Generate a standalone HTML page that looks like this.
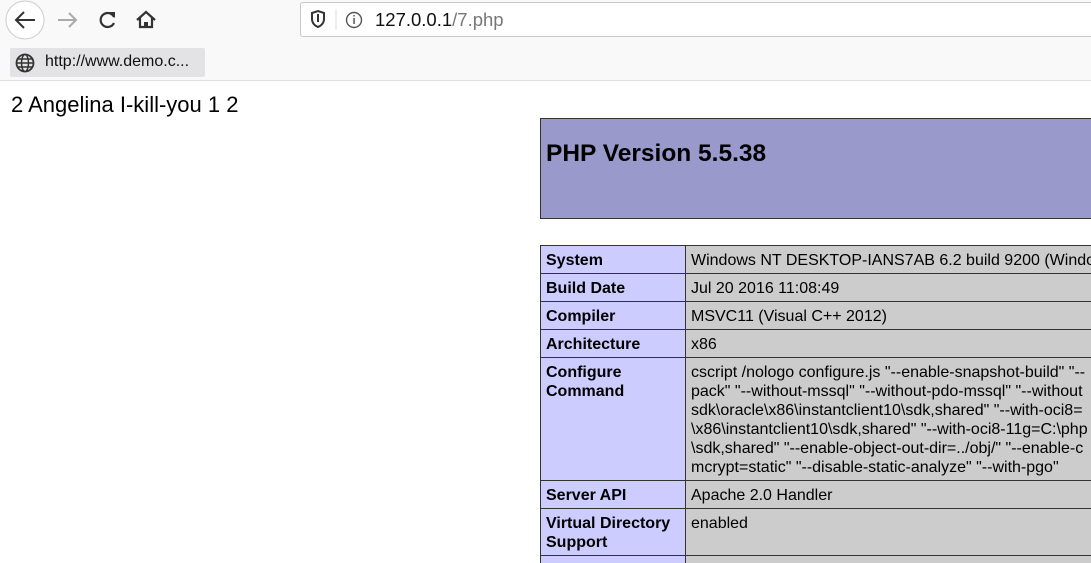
<!DOCTYPE html><html><head><style>
body{margin:0;width:1091px;height:563px;overflow:hidden;background:#fff;font-family:"Liberation Sans",Arial,sans-serif;position:relative}
.a{position:absolute}
.tb{left:0;top:0;width:1091px;height:40px;background:#f9f9fa}
.bm{left:0;top:40px;width:1091px;height:40px;background:#f9f9fa;border-bottom:1px solid #e0e0e0}
.url{left:300px;top:2px;width:791px;height:35px;background:#fff;border:1px solid #c8c8c8;border-right:none;border-radius:3px 0 0 3px;box-sizing:border-box}
.clip{left:0;top:0;width:1091px;height:563px;overflow:hidden}
table{position:absolute;left:540px;top:245px;border-collapse:collapse;width:640px;font-size:16px;table-layout:fixed}
td{border:1px solid #333;padding:5px 4px 3px 5px;vertical-align:top;line-height:19px;color:#000;overflow:hidden}
td.e{background:#ccccff;font-weight:bold}
td.v{background:#cccccc;white-space:nowrap}
</style></head><body>
<div class="a tb"></div>
<div class="a bm"></div>
<svg class="a" style="left:3px;top:0" width="170" height="40">
<circle cx="22" cy="20" r="19" fill="#fff" stroke="#ccc"/>
<path d="M32 20H14M21 12l-8 8 8 8" stroke="#333" stroke-width="2" fill="none"/>
<path d="M73 20H55M66 13l7 7-7 7" stroke="#aaa" stroke-width="2" fill="none"/>
<path d="M111 17a7 7 0 1 0 0 6" stroke="#333" stroke-width="2.2" fill="none"/><path d="M106 12h6v6z" fill="#333"/>
<path d="M134 20l9-8 9 8M137 18v9h12v-9" stroke="#333" stroke-width="2.2" fill="none"/><rect x="141" y="22" width="4" height="5" fill="#333"/>
</svg>
<div class="a url"></div>
<svg class="a" style="left:308px;top:8px" width="60" height="24">
<path d="M4 5l6-2 6 2v6c0 4-3 7-6 8-3-1-6-4-6-8z" stroke="#333" stroke-width="2" fill="none"/><rect x="9" y="6" width="2" height="8" fill="#333"/>
<line x1="28" y1="1" x2="28" y2="22" stroke="#ddd"/>
<circle cx="46" cy="12" r="7.5" stroke="#555" stroke-width="1.4" fill="none"/><rect x="45.3" y="10" width="1.5" height="6" fill="#555"/><rect x="45.3" y="7" width="1.5" height="1.5" fill="#555"/>
</svg>
<div class="a" style="left:375px;top:9px;font-size:18.5px;color:#111">127.0.0.1<span style="color:#777">/7.php</span></div>
<div class="a" style="left:10px;top:48px;width:195px;height:29px;background:#e3e3e5;border-radius:2px"></div>
<svg class="a" style="left:14px;top:52px" width="22" height="22"><circle cx="11" cy="11" r="8.5" stroke="#333" stroke-width="1.8" fill="none"/><ellipse cx="11" cy="11" rx="3.5" ry="8.5" stroke="#333" stroke-width="1.5" fill="none"/><path d="M2.5 11h17M4 7h14M4 15h14" stroke="#333" stroke-width="1.4"/></svg>
<div class="a" style="left:45px;top:53px;font-size:16px;color:#111">http://www.demo.c...</div>
<div class="a" style="left:11px;top:92px;font-size:22px;color:#000">2 Angelina I-kill-you 1 2</div>
<div class="clip a">
<div class="a" style="left:540px;top:118px;width:560px;height:99px;background:#9999cc;border:1px solid #333"></div>
<div class="a" style="left:546px;top:140px;font-size:24.5px;font-weight:bold;color:#000">PHP Version 5.5.38</div>
<table>
<colgroup><col style="width:145px"><col></colgroup>
<tr><td class="e">System</td><td class="v">Windows NT DESKTOP-IANS7AB 6.2 build 9200 (Windows 8 Business Edition)</td></tr>
<tr><td class="e">Build Date</td><td class="v">Jul 20 2016 11:08:49</td></tr>
<tr><td class="e">Compiler</td><td class="v">MSVC11 (Visual C++ 2012)</td></tr>
<tr><td class="e">Architecture</td><td class="v">x86</td></tr>
<tr><td class="e">Configure Command</td><td class="v">cscript /nologo configure.js "--enable-snapshot-build" "--<br>pack" "--without-mssql" "--without-pdo-mssql" "--without<br>sdk\oracle\x86\instantclient10\sdk,shared" "--with-oci8=<br>\x86\instantclient10\sdk,shared" "--with-oci8-11g=C:\php<br>\sdk,shared" "--enable-object-out-dir=../obj/" "--enable-c<br>mcrypt=static" "--disable-static-analyze" "--with-pgo"</td></tr>
<tr><td class="e">Server API</td><td class="v">Apache 2.0 Handler</td></tr>
<tr><td class="e">Virtual Directory Support</td><td class="v">enabled</td></tr>
<tr><td class="e">&nbsp;</td><td class="v">&nbsp;</td></tr>
</table>
</div>
</body></html>
